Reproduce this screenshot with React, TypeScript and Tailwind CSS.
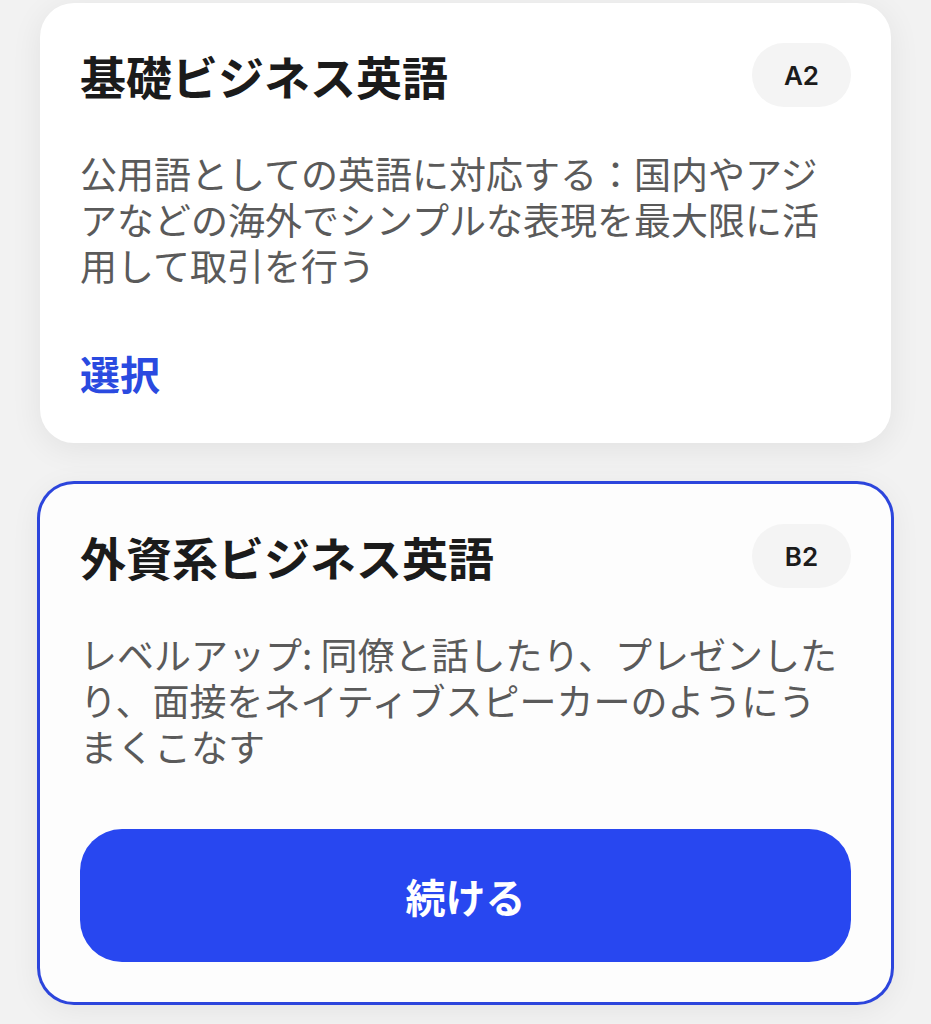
import React from 'react';

type Course = {
  id: string;
  title: string;
  level: string;
  description: string;
  active?: boolean;
};

const COURSES: Course[] = [
  {
    id: 'basic',
    title: '基礎ビジネス英語',
    level: 'A2',
    description: '公用語としての英語に対応する：国内やアジアなどの海外でシンプルな表現を最大限に活用して取引を行う',
  },
  {
    id: 'foreign',
    title: '外資系ビジネス英語',
    level: 'B2',
    description: 'レベルアップ: 同僚と話したり、プレゼンしたり、面接をネイティブスピーカーのようにうまくこなす',
    active: true,
  },
];

const CourseCard: React.FC<{ course: Course }> = ({ course }) => (
  <div
    className={`rounded-[34px] px-10 pt-10 shadow-[0_6px_32px_rgba(0,0,0,0.07)] ${
      course.active ? 'bg-[#fdfdfd] pb-10 ring-[3px] ring-[#2c45dc]' : 'bg-white pb-[45px]'
    }`}
  >
    <div className="flex items-center justify-between">
      <h2 className="text-[46px] font-bold leading-[64px] text-[#1b1b1b]">{course.title}</h2>
      <span
        className="flex h-16 w-[99px] items-center justify-center rounded-full bg-[#f4f4f4] text-[26px] font-semibold text-[#1b1b1b]"
        style={{ fontFamily: 'Inter, "Noto Sans", sans-serif' }}
      >
        {course.level}
      </span>
    </div>
    <p className="mt-[43px] text-[37px] leading-[46px] text-[#5a5a5a]">{course.description}</p>
    {course.active ? (
      <button className="mt-[60px] flex h-[133px] w-full items-center justify-center rounded-[42px] bg-[#2847f0] text-[40px] font-bold text-white">
        続ける
      </button>
    ) : (
      <button className="mt-[60px] block text-[40px] font-bold leading-[50px] text-[#2a4ae0]">選択</button>
    )}
  </div>
);

export default function App() {
  return (
    <div
      className="min-h-screen bg-[#f2f2f2] px-10 pt-[3px]"
      style={{ fontFamily: '"Noto Sans CJK JP", "Noto Sans", sans-serif' }}
    >
      <div className="flex flex-col gap-[41px]">
        {COURSES.map((c) => (
          <CourseCard key={c.id} course={c} />
        ))}
      </div>
    </div>
  );
}
